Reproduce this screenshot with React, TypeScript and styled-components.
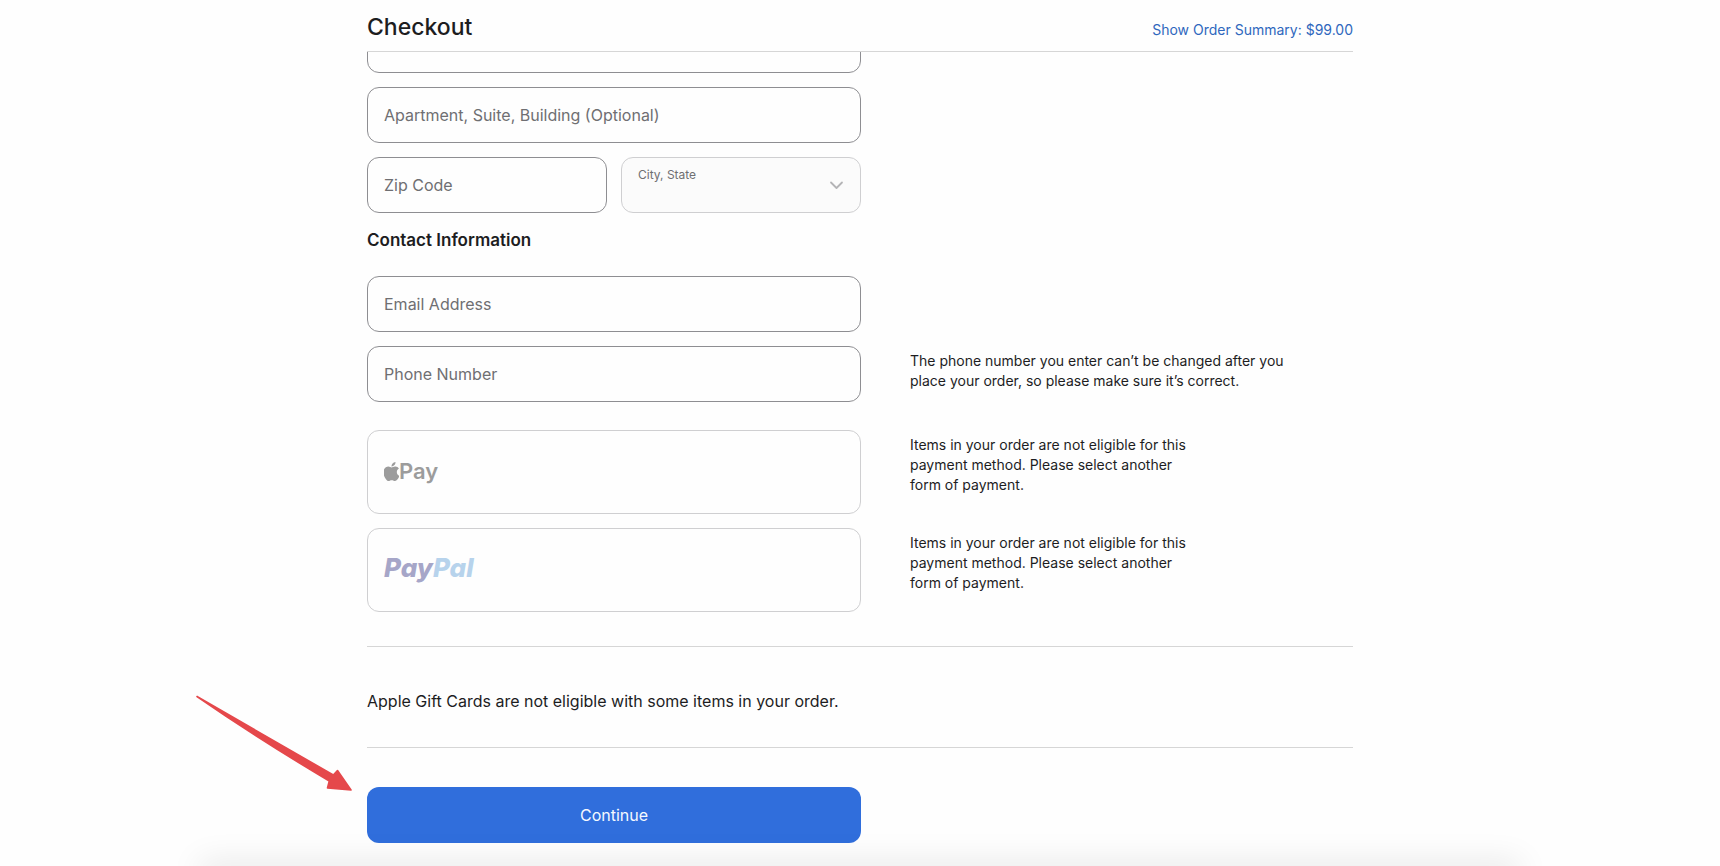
import React from "react";
import styled, { createGlobalStyle } from "styled-components";
import { FaApple } from "react-icons/fa";

const GlobalStyle = createGlobalStyle`
  *, *::before, *::after { box-sizing: border-box; }
  body {
    margin: 0;
    background: #fefefe;
    color: #1d1d1f;
    font-family: Inter, "Liberation Sans", sans-serif;
    font-size: 16px;
    line-height: 24px;
  }
  button, input, select { font: inherit; color: inherit; }
  h1, h2, p { margin: 0; }
`;

const Page = styled.div`
  position: relative;
  min-height: 100vh;
  overflow: hidden;
`;

const Container = styled.div`
  width: 100%;
  max-width: 986px;
  margin: 0 auto;
`;

const Header = styled.header`
  position: sticky;
  top: 0;
  z-index: 2;
  background: #fefefe;
`;

const HeaderBar = styled(Container)`
  display: flex;
  align-items: flex-end;
  justify-content: space-between;
  height: 52px;
  padding-bottom: 8px;
  border-bottom: 1px solid #d6d6d6;
`;

const Title = styled.h1`
  font-size: 23px;
  font-weight: 500;
  line-height: 32px;
`;

const SummaryLink = styled.a`
  color: #2f67bd;
  font-size: 14px;
  line-height: 26px;
  text-decoration: none;
`;

const Form = styled.form`
  display: flex;
  flex-direction: column;
  gap: 14px;
  margin-top: -35px;
`;

const Row = styled.div`
  display: grid;
  grid-template-columns: 494px 1fr;
  column-gap: 49px;
`;

const Pair = styled.div`
  display: grid;
  grid-template-columns: 1fr 1fr;
  gap: 14px;
`;

const Field = styled.div`
  position: relative;
`;

const FieldLabel = styled.label<{ $small?: boolean }>`
  position: absolute;
  left: 17px;
  top: ${(p) => (p.$small ? "10px" : "16px")};
  color: #6f6f72;
  font-size: ${(p) => (p.$small ? "12px" : "16px")};
  line-height: ${(p) => (p.$small ? "16px" : "24px")};
  pointer-events: none;
`;

const Input = styled.input`
  display: block;
  width: 100%;
  height: 56px;
  padding: 0 16px;
  border: 1px solid #8e8e92;
  border-radius: 12px;
  background: #fefefe;
  outline-color: #2f6fdd;
`;

const Select = styled.select`
  display: block;
  width: 100%;
  height: 56px;
  padding: 20px 40px 0 16px;
  border: 1px solid #cfcfd1;
  border-radius: 12px;
  background: #fbfbfb;
  appearance: none;
  opacity: 1;
`;

const Chevron = styled.svg`
  position: absolute;
  right: 17px;
  top: 20px;
  pointer-events: none;
`;

const SectionTitle = styled.h2`
  margin: 0 0 9px;
  font-size: 17px;
  font-weight: 600;
  line-height: 26px;
`;

const Note = styled.p<{ $narrow?: boolean }>`
  max-width: ${(p) => (p.$narrow ? "280px" : "380px")};
  padding-top: 5px;
  font-size: 14px;
  line-height: 20px;
`;

const Payments = styled.div`
  display: flex;
  flex-direction: column;
  gap: 14px;
  margin-top: 14px;
`;

const PaymentButton = styled.button`
  display: flex;
  align-items: center;
  width: 100%;
  height: 84px;
  padding: 0 16px;
  border: 1px solid #cfcfd1;
  border-radius: 12px;
  background: #fefefe;
`;

const ApplePay = styled.span`
  display: flex;
  align-items: center;
  padding-bottom: 2px;
  color: #9c9c9c;
  font-size: 22px;
  font-weight: 600;
  line-height: 24px;
`;

const AppleLogo = styled(FaApple)`
  width: 15px;
  height: 19px;
`;

const PayPal = styled.span`
  padding-bottom: 5px;
  color: #a6a6c8;
  font-feature-settings: "cv11";
  font-size: 26px;
  font-style: italic;
  font-weight: 800;
  line-height: 32px;
`;

const PayPalEnd = styled.span`
  color: #b7d3ec;
`;

const GiftCards = styled.p`
  margin-top: 20px;
  padding: 42px 0 34px;
  border: solid #d6d6d6;
  border-width: 1px 0;
`;

const Actions = styled.div`
  position: relative;
  margin-top: 25px;
  padding-bottom: 22px;
`;

const Continue = styled.button`
  display: block;
  width: 494px;
  max-width: 100%;
  height: 56px;
  border: 0;
  border-radius: 12px;
  background: #306edc;
  color: #f5f9ff;
  cursor: pointer;
`;

const Arrow = styled.svg`
  position: absolute;
  left: -172px;
  top: -93px;
  pointer-events: none;
`;

const BottomShade = styled.div`
  position: absolute;
  right: 12%;
  bottom: -12px;
  left: 12%;
  height: 10px;
  box-shadow: 0 0 32px 6px rgba(0, 0, 0, 0.1);
  pointer-events: none;
`;

function TextField({ id, label, type = "text" }: { id: string; label: string; type?: string }) {
  return (
    <Field>
      <Input id={id} type={type} aria-label={label || "Street Address"} />
      {label && <FieldLabel htmlFor={id}>{label}</FieldLabel>}
    </Field>
  );
}

function IneligibleNote() {
  return (
    <Note $narrow>
      Items in your order are not eligible for this payment method. Please select another form of payment.
    </Note>
  );
}

export default function App() {
  return (
    <Page>
      <GlobalStyle />
      <Header>
        <HeaderBar>
          <Title>Checkout</Title>
          <SummaryLink href="#summary">Show Order Summary: $99.00</SummaryLink>
        </HeaderBar>
      </Header>
      <Container as="main">
        <Form onSubmit={(e: React.FormEvent) => e.preventDefault()}>
          <Row><TextField id="street" label="" /></Row>
          <Row><TextField id="apartment" label="Apartment, Suite, Building (Optional)" /></Row>
          <Row>
            <Pair>
              <TextField id="zip" label="Zip Code" />
              <Field>
                <Select id="city" disabled />
                <FieldLabel htmlFor="city" $small>City, State</FieldLabel>
                <Chevron width="15" height="16" viewBox="0 0 15 16" fill="none" aria-hidden="true">
                  <path d="M2 5.5 7.5 11 13 5.5" stroke="#b4b4b6" strokeWidth="1.8" strokeLinecap="round" strokeLinejoin="round" />
                </Chevron>
              </Field>
            </Pair>
          </Row>
          <SectionTitle>Contact Information</SectionTitle>
          <Row><TextField id="email" label="Email Address" type="email" /></Row>
          <Row>
            <TextField id="phone" label="Phone Number" type="tel" />
            <Note>The phone number you enter can’t be changed after you place your order, so please make sure it’s correct.</Note>
          </Row>
          <Payments>
            <Row>
              <PaymentButton type="button" disabled>
                <ApplePay><AppleLogo viewBox="18 32 350 448" aria-hidden="true" />Pay</ApplePay>
              </PaymentButton>
              <IneligibleNote />
            </Row>
            <Row>
              <PaymentButton type="button" disabled>
                <PayPal>Pay<PayPalEnd>Pal</PayPalEnd></PayPal>
              </PaymentButton>
              <IneligibleNote />
            </Row>
          </Payments>
          <GiftCards>Apple Gift Cards are not eligible with some items in your order.</GiftCards>
          <Actions>
            <Continue type="submit">Continue</Continue>
            <Arrow width="160" height="100" viewBox="0 0 160 100" aria-hidden="true">
              <path
                d="M2 2.5 L138.3 81 L142.5 76.5 L156 96 L132.5 94 L134.3 87 Q65 46 2 2.5 Z"
                fill="#e5484b" stroke="#e5484b" strokeWidth="1.6" strokeLinejoin="round"
              />
            </Arrow>
          </Actions>
        </Form>
      </Container>
      <BottomShade />
    </Page>
  );
}
